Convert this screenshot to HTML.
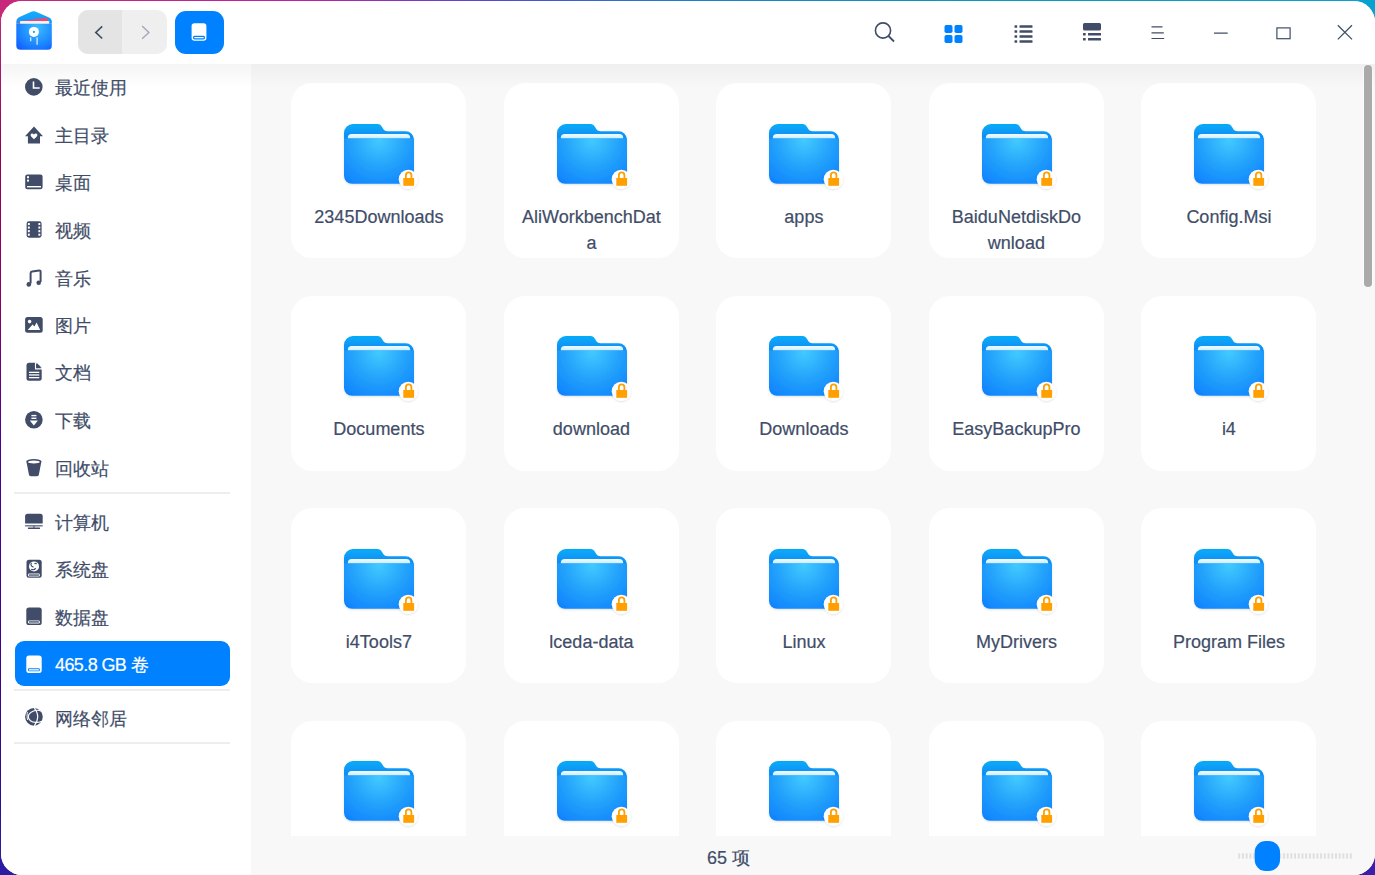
<!DOCTYPE html>
<html><head><meta charset="utf-8">
<style>
html,body{margin:0;padding:0;}
body{width:1375px;height:875px;overflow:hidden;position:relative;
 background:linear-gradient(180deg,#c42a82 0%,#900062 17%,#8a006a 34%,#4d0090 51%,#460088 74%,#2a1090 92%,#3020a8 100%);
 font-family:"Liberation Sans",sans-serif;}
#bgtop{position:absolute;left:0;top:0;width:1375px;height:22px;background:linear-gradient(90deg,#c8287a 0%,#be1eaa 22%,#524ad0 36%,#1e7fcc 49.5%,#049cbc 73%,#06a3d2 100%);}
#bgbot{position:absolute;left:0;top:850px;width:1375px;height:25px;background:linear-gradient(90deg,#2c1ca4 0%,#3a20a8 100%);}
#win{position:absolute;left:1px;top:1px;width:1374px;height:874px;border-radius:21px;overflow:hidden;background:#fff;}
.abs{position:absolute;}
#title{left:0;top:0;width:1374px;height:63px;background:#fff;}
#side{left:0;top:63px;width:250px;height:811px;background:#fff;}
#side .shade{left:0;top:0;width:250px;height:24px;background:linear-gradient(180deg,#f5f5f5,#fff);}
#content{left:250px;top:63px;width:1124px;height:772px;background:#f8f8f8;overflow:hidden;}
#content .shade{left:0;top:0;width:1124px;height:24px;background:linear-gradient(180deg,#efefef,#f8f8f8);}
#status{left:250px;top:835px;width:1124px;height:39px;background:#f8f8f8;}
.item{position:absolute;left:14px;width:215px;height:45px;border-radius:9px;}
.item .ic{position:absolute;left:10px;top:13.5px;width:18px;height:18px;}
.item .tx{position:absolute;left:40px;top:1.5px;height:45px;line-height:45px;font-size:18px;color:#414d68;white-space:nowrap;-webkit-text-stroke:0.2px currentColor;}
.item.sel{background:#0081ff;}
.item.sel .tx{color:#fff;}
.sep{position:absolute;left:13px;width:216px;height:2px;background:#eeeeee;}
.card{position:absolute;width:175px;height:175px;border-radius:21px;background:#fff;}
.card svg{position:absolute;left:53px;top:40.8px;width:80px;height:70px;}
.card .nm{position:absolute;left:0;top:120.5px;width:175px;text-align:center;font-size:18px;line-height:26.5px;color:#414d68;-webkit-text-stroke:0.2px #414d68;}
</style></head><body>
<div id="bgtop"></div><div id="bgbot"></div>
<svg width="0" height="0" style="position:absolute">
 <defs>
  <linearGradient id="gback" x1="0" y1="0" x2="0" y2="1">
   <stop offset="0" stop-color="#06acf9"/><stop offset="0.4" stop-color="#0b90f5"/><stop offset="1" stop-color="#0a7ff2"/>
  </linearGradient>
  <radialGradient id="gfront" cx="35" cy="16" r="58" gradientUnits="userSpaceOnUse">
   <stop offset="0" stop-color="#42caff"/><stop offset="0.5" stop-color="#22a0fb"/><stop offset="1" stop-color="#0a7cff"/>
  </radialGradient>
  <linearGradient id="gpaper" x1="0" y1="0" x2="0" y2="1">
   <stop offset="0" stop-color="#f2fbff"/><stop offset="1" stop-color="#c9eeff"/>
  </linearGradient>
  <filter id="fsh" x="-20%" y="-20%" width="140%" height="140%">
   <feDropShadow dx="0" dy="1" stdDeviation="1" flood-color="#000" flood-opacity="0.12"/>
  </filter>
  <g id="folder">
   <g filter="url(#fsh)">
   <path d="M0,9 A9,9 0 0 1 9,0 H33.2 C35.8,0 36.8,1 38,3 L39.4,5.3 C40.6,6.8 41.6,7.2 43.4,7.2 H61.5 A8.5,8.5 0 0 1 70,15.7 V30 H0 Z" fill="url(#gback)"/>
   <path d="M3.8,14.5 V14 A4,4 0 0 1 7.8,10 H62.2 A4,4 0 0 1 66.2,14 V14.5 Z" fill="url(#gpaper)"/>
   <path d="M0,14.4 H70 V51.8 A8,8 0 0 1 62,59.8 H8 A8,8 0 0 1 0,51.8 Z" fill="url(#gfront)"/>
   </g>
   <circle cx="64.3" cy="55.3" r="9.6" fill="#fff" filter="url(#fsh)"/>
   <path d="M61.9,54.5 V51.2 A2.75,2.75 0 0 1 67.4,51.2 V54.5" fill="none" stroke="#ffa000" stroke-width="1.8"/>
   <rect x="59.3" y="54" width="10.8" height="7.8" fill="#ffa000"/>
  </g>
 </defs>
</svg>
<div id="win">
 <div id="title" class="abs">
  <!-- app icon -->
  <svg class="abs" style="left:13px;top:8px" width="40" height="42" viewBox="-1 -1 40 42">
   <defs>
    <radialGradient id="gapp" cx="22" cy="18" r="26" gradientUnits="userSpaceOnUse"><stop offset="0" stop-color="#3cbcff"/><stop offset="0.6" stop-color="#1e8cff"/><stop offset="1" stop-color="#1262ff"/></radialGradient>
    <linearGradient id="gapp2" x1="0" y1="0" x2="0" y2="1"><stop offset="0" stop-color="#12b0fb"/><stop offset="1" stop-color="#1690fa"/></linearGradient>
   </defs>
   <path d="M1.3,13.8 V11.5 Q1.3,8.5 4,7.2 L16.8,1.6 Q18.6,0.9 20.4,1.6 L33.5,7.2 Q36.8,8.5 36.8,11.5 V13.8 Z" fill="url(#gapp2)"/>
   <path d="M3.6,13.8 L4.6,11.3 L31.3,7.8 Q32,7.8 32.2,8.6 L33.8,13.8 Z" fill="#f2486e"/>
   <rect x="5" y="11" width="29.2" height="2.9" rx="0.6" fill="#f3f3f3"/>
   <path d="M1.3,13.8 H36.8 V35.7 Q36.8,39.7 32.8,39.7 H5.3 Q1.3,39.7 1.3,35.7 Z" fill="url(#gapp)"/>
   <circle cx="18.9" cy="21.9" r="5" fill="#fff"/><circle cx="18.9" cy="21.9" r="1.1" fill="#18a8f8"/>
   <rect x="15.1" y="27.4" width="1.2" height="3.8" fill="#e6f2ff"/><rect x="21.5" y="27.4" width="1.2" height="7.3" fill="#e6f2ff"/>
  </svg>
  <!-- nav -->
  <div class="abs" style="left:77.2px;top:9.2px;width:88.4px;height:44px;border-radius:10px;overflow:hidden;background:#efefef;">
   <div class="abs" style="left:0;top:0;width:44px;height:44px;background:#e4e4e4;"></div>
   <svg class="abs" style="left:0;top:0" width="88" height="44"><path d="M24.2,16.3 L17.8,22.4 L24.2,28.5" fill="none" stroke="#414d68" stroke-width="1.6"/><path d="M64.1,16.1 L70.9,22.4 L64.1,28.7" fill="none" stroke="#a3a9b8" stroke-width="1.4"/></svg>
  </div>
  <div class="abs" style="left:174px;top:10px;width:49px;height:43px;border-radius:11px;background:#0081ff;">
   <svg class="abs" style="left:0;top:0" width="49" height="43"><rect x="16.6" y="12.2" width="14.8" height="17.6" rx="2.8" fill="#fff"/><rect x="18.6" y="25.4" width="10.8" height="2.4" rx="1" fill="#fff" stroke="#0081ff" stroke-width="1.3"/></svg>
  </div>
  <!-- right icons -->
  <svg class="abs" style="left:859px;top:9px" width="514" height="45">
   <circle cx="23" cy="20.5" r="7.6" fill="none" stroke="#414d68" stroke-width="1.6"/>
   <path d="M28.5,26 L34,31.5" stroke="#414d68" stroke-width="1.8"/>
   <g fill="#0081ff"><rect x="84.5" y="15" width="8" height="8" rx="1.8"/><rect x="94.5" y="15" width="8" height="8" rx="1.8"/><rect x="84.5" y="25" width="8" height="8" rx="1.8"/><rect x="94.5" y="25" width="8" height="8" rx="1.8"/></g>
   <g fill="#414d68"><rect x="154.5" y="15.3" width="2.7" height="2.5" rx=".5"/><rect x="159.5" y="15.3" width="13" height="2.5" rx=".5"/>
    <rect x="154.5" y="20.3" width="2.7" height="2.5" rx=".5"/><rect x="159.5" y="20.3" width="13" height="2.5" rx=".5"/>
    <rect x="154.5" y="25.3" width="2.7" height="2.5" rx=".5"/><rect x="159.5" y="25.3" width="13" height="2.5" rx=".5"/>
    <rect x="154.5" y="30.3" width="2.7" height="2.5" rx=".5"/><rect x="159.5" y="30.3" width="13" height="2.5" rx=".5"/>
    <rect x="223" y="13" width="18" height="7.5" rx="1.5"/>
    <rect x="223" y="23" width="2.7" height="2.5" rx=".5"/><rect x="228" y="23" width="13" height="2.5" rx=".5"/>
    <rect x="223" y="28" width="2.7" height="2.5" rx=".5"/><rect x="228" y="28" width="13" height="2.5" rx=".5"/>
   </g>
   <g stroke="#414d68" stroke-width="1.2" fill="none">
    <path d="M291.5,16.9 H302.5 M291.5,22.8 H303.8 M291.5,28.5 H304.2"/>
    <path d="M354,23.2 H367.7"/>
    <rect x="416.9" y="17.9" width="13.2" height="10.8"/>
    <path d="M477.8,15.2 L492,29.4 M492,15.2 L477.8,29.4" stroke-width="1.25"/>
   </g>
  </svg>
 </div>

 <div id="side" class="abs">
  <div class="shade abs"></div>
  <div class="item" style="top:0.5px"><svg class="ic" viewBox="0 0 18 18" overflow="visible"><circle cx="8.8" cy="8.9" r="8.8" fill="#414d68"/><path d="M8.5,3.6 V10 H14.7" fill="none" stroke="#fff" stroke-width="1.6"/></svg><div class="tx">最近使用</div></div>
  <div class="item" style="top:48.5px"><svg class="ic" viewBox="0 0 18 18" overflow="visible"><path d="M9,0.6 L18,10.2 H15 V17.6 H2.9 V10.2 H0 Z" fill="#414d68"/><path d="M9,13.2 C7.2,11.8 5.6,10.6 5.6,9.1 C5.6,7.4 7.8,6.9 9,8.4 C10.2,6.9 12.4,7.4 12.4,9.1 C12.4,10.6 10.8,11.8 9,13.2 Z" fill="#fff"/></svg><div class="tx">主目录</div></div>
  <div class="item" style="top:95.5px"><svg class="ic" viewBox="0 0 18 18" overflow="visible"><g transform="translate(0,1)"><rect x="0.2" y="0.5" width="17.4" height="14.8" rx="2.2" fill="#414d68"/><rect x="2" y="12" width="14" height="1.4" fill="#fff"/><rect x="2" y="2.2" width="2" height="2" fill="#fff"/><rect x="2" y="5.6" width="2" height="2" fill="#fff"/></g></svg><div class="tx">桌面</div></div>
  <div class="item" style="top:143.5px"><svg class="ic" viewBox="0 0 18 18" overflow="visible"><rect x="1.6" y="0.3" width="15" height="16.4" rx="2.4" fill="#414d68"/><rect x="2.9" y="2.0" width="1.9" height="2.1" fill="#fff"/><rect x="13.4" y="2.0" width="1.9" height="2.1" fill="#fff"/><rect x="2.9" y="5.55" width="1.9" height="2.1" fill="#fff"/><rect x="13.4" y="5.55" width="1.9" height="2.1" fill="#fff"/><rect x="2.9" y="9.1" width="1.9" height="2.1" fill="#fff"/><rect x="13.4" y="9.1" width="1.9" height="2.1" fill="#fff"/><rect x="2.9" y="12.649999999999999" width="1.9" height="2.1" fill="#fff"/><rect x="13.4" y="12.649999999999999" width="1.9" height="2.1" fill="#fff"/></svg><div class="tx">视频</div></div>
  <div class="item" style="top:191.0px"><svg class="ic" viewBox="0 0 18 18" overflow="visible"><g transform="translate(0,1)"><path d="M5.6,13.6 V3.2 Q5.6,1.6 7.2,1.4 L14.2,0.5 Q15.6,0.4 15.6,1.9 V12" fill="none" stroke="#414d68" stroke-width="2"/><circle cx="3.8" cy="14.4" r="2.3" fill="#414d68"/><circle cx="13.7" cy="12.7" r="2.3" fill="#414d68"/></g></svg><div class="tx">音乐</div></div>
  <div class="item" style="top:238.5px"><svg class="ic" viewBox="0 0 18 18" overflow="visible"><rect x="0.1" y="1.1" width="17.6" height="15.6" rx="2.5" fill="#414d68"/><circle cx="4.6" cy="5.6" r="1.8" fill="#fff"/><path d="M2.7,13.9 L7.6,8.4 L9.4,10.4 L11.6,6.6 L15.2,13.9 Z" fill="#fff"/></svg><div class="tx">图片</div></div>
  <div class="item" style="top:285.5px"><svg class="ic" viewBox="0 0 18 18" overflow="visible"><path d="M4,-0.3 H10.4 L16.7,6 V15.3 Q16.7,17.8 14.2,17.8 H4 Q1.5,17.8 1.5,15.3 V2.2 Q1.5,-0.3 4,-0.3 Z" fill="#414d68"/><path d="M11.6,-0.3 L16.7,4.8 H11.6 Z" fill="#414d68"/><path d="M10.5,-0.5 V5.9 H16.9" fill="none" stroke="#fff" stroke-width="1.1"/><rect x="4" y="8.7" width="10.3" height="1.3" fill="#fff"/><rect x="4" y="11.3" width="10.3" height="1.3" fill="#fff"/><rect x="4" y="14" width="10.3" height="1.3" fill="#fff"/></svg><div class="tx">文档</div></div>
  <div class="item" style="top:333.5px"><svg class="ic" viewBox="0 0 18 18" overflow="visible"><circle cx="8.9" cy="8.8" r="8.8" fill="#414d68"/><rect x="6.4" y="3.9" width="5" height="1.4" fill="#fff"/><rect x="6.4" y="6.6" width="5" height="1.4" fill="#fff"/><path d="M4.8,9.6 H12.9 L8.85,14.6 Z" fill="#fff"/></svg><div class="tx">下载</div></div>
  <div class="item" style="top:381.0px"><svg class="ic" viewBox="0 0 18 18" overflow="visible"><path d="M1.4,2.6 L3.9,15.4 Q4.2,17.3 6.2,17.3 H11.6 Q13.6,17.3 13.9,15.4 L16.4,2.6 Z" fill="#414d68"/><ellipse cx="8.9" cy="2.6" rx="7.6" ry="2.6" fill="#414d68"/><ellipse cx="8.9" cy="3" rx="6" ry="1.5" fill="#fff"/></svg><div class="tx">回收站</div></div>
  <div class="item" style="top:435.0px"><svg class="ic" viewBox="0 0 18 18" overflow="visible"><path d="M0.1,3.3 Q0.1,0.8 2.6,0.8 H15.2 Q17.7,0.8 17.7,3.3 V10.6 H0.1 Z" fill="#414d68"/><rect x="0.1" y="12.3" width="17.6" height="1.1" fill="#414d68"/><rect x="8.1" y="13.3" width="1.6" height="1.3" fill="#414d68"/><rect x="2.9" y="14.5" width="12.1" height="1.6" rx="0.5" fill="#414d68"/></svg><div class="tx">计算机</div></div>
  <div class="item" style="top:482.5px"><svg class="ic" viewBox="0 0 18 18" overflow="visible"><rect x="1.5" y="-0.3" width="15.2" height="18.1" rx="2.5" fill="#414d68"/><circle cx="9" cy="6.4" r="5" fill="#fff"/><path d="M6.6,2.9 C5.3,4.3 5.9,6.3 8.5,7.1 M6.2,9.2 C7.8,10 9.7,9.7 10.7,8.1 M9.5,3.7 C10.3,3.2 11,3.3 11.7,3.8" fill="none" stroke="#414d68" stroke-width="1.15"/><rect x="3.1" y="13.5" width="11.7" height="3" rx="1.2" fill="#fff"/><rect x="4" y="14.4" width="9.9" height="1.3" fill="#414d68"/></svg><div class="tx">系统盘</div></div>
  <div class="item" style="top:530.0px"><svg class="ic" viewBox="0 0 18 18" overflow="visible"><rect x="1.3" y="-0.4" width="15.4" height="17.4" rx="2.6" fill="#414d68"/><rect x="3.1" y="12.4" width="11.7" height="3" rx="1.2" fill="#fff"/><rect x="4" y="13.3" width="9.9" height="1.3" fill="#414d68"/></svg><div class="tx">数据盘</div></div>
  <div class="item sel" style="top:577.0px"><svg class="ic" viewBox="0 0 18 18" overflow="visible"><rect x="1.3" y="0.5" width="15.4" height="17.6" rx="2.8" fill="#fff"/><rect x="3" y="13.3" width="11.9" height="3" rx="1.2" fill="#0081ff"/><rect x="4" y="14.2" width="9.9" height="1.3" fill="#fff"/></svg><div class="tx"><span style="letter-spacing:-0.6px">465.8 GB</span> 卷</div></div>
  <div class="item" style="top:631.5px"><svg class="ic" viewBox="0 0 18 18" overflow="visible"><circle cx="8.93" cy="7.8" r="8.85" fill="#414d68"/><path d="M16.5,2.3 C14,1 11,0.9 8,2.2 C5,3.6 3.3,5.5 3.3,7.8 C3.3,10.8 6.5,13.2 10.6,13.4 C12.8,13.5 15,13 17,12.2" fill="none" stroke="#fff" stroke-width="1.2"/><path d="M9.3,-0.9 C11.8,2.2 12.8,5.5 12.7,8.3 C12.6,11.3 11.5,14 9.3,16.8" fill="none" stroke="#fff" stroke-width="1.2"/><path d="M2.4,3 C1.9,5.5 1.9,8.5 2.6,11" fill="none" stroke="#fff" stroke-width="0.9"/></svg><div class="tx">网络邻居</div></div>
  <div class="sep" style="top:428px"></div>
  <div class="sep" style="top:624.5px"></div>
  <div class="sep" style="top:678px"></div>
 </div>

 <div id="content" class="abs">
  <div class="shade abs"></div>
  <div class="card" style="left:40.4px;top:19.0px"><svg viewBox="0 0 80 70" overflow="visible"><use href="#folder"/></svg><div class="nm">2345Downloads</div></div>
  <div class="card" style="left:252.9px;top:19.0px"><svg viewBox="0 0 80 70" overflow="visible"><use href="#folder"/></svg><div class="nm">AliWorkbenchDat<br>a</div></div>
  <div class="card" style="left:465.4px;top:19.0px"><svg viewBox="0 0 80 70" overflow="visible"><use href="#folder"/></svg><div class="nm">apps</div></div>
  <div class="card" style="left:677.9px;top:19.0px"><svg viewBox="0 0 80 70" overflow="visible"><use href="#folder"/></svg><div class="nm">BaiduNetdiskDo<br>wnload</div></div>
  <div class="card" style="left:890.4px;top:19.0px"><svg viewBox="0 0 80 70" overflow="visible"><use href="#folder"/></svg><div class="nm">Config.Msi</div></div>
  <div class="card" style="left:40.4px;top:231.5px"><svg viewBox="0 0 80 70" overflow="visible"><use href="#folder"/></svg><div class="nm">Documents</div></div>
  <div class="card" style="left:252.9px;top:231.5px"><svg viewBox="0 0 80 70" overflow="visible"><use href="#folder"/></svg><div class="nm">download</div></div>
  <div class="card" style="left:465.4px;top:231.5px"><svg viewBox="0 0 80 70" overflow="visible"><use href="#folder"/></svg><div class="nm">Downloads</div></div>
  <div class="card" style="left:677.9px;top:231.5px"><svg viewBox="0 0 80 70" overflow="visible"><use href="#folder"/></svg><div class="nm">EasyBackupPro</div></div>
  <div class="card" style="left:890.4px;top:231.5px"><svg viewBox="0 0 80 70" overflow="visible"><use href="#folder"/></svg><div class="nm">i4</div></div>
  <div class="card" style="left:40.4px;top:444.0px"><svg viewBox="0 0 80 70" overflow="visible"><use href="#folder"/></svg><div class="nm">i4Tools7</div></div>
  <div class="card" style="left:252.9px;top:444.0px"><svg viewBox="0 0 80 70" overflow="visible"><use href="#folder"/></svg><div class="nm">lceda-data</div></div>
  <div class="card" style="left:465.4px;top:444.0px"><svg viewBox="0 0 80 70" overflow="visible"><use href="#folder"/></svg><div class="nm">Linux</div></div>
  <div class="card" style="left:677.9px;top:444.0px"><svg viewBox="0 0 80 70" overflow="visible"><use href="#folder"/></svg><div class="nm">MyDrivers</div></div>
  <div class="card" style="left:890.4px;top:444.0px"><svg viewBox="0 0 80 70" overflow="visible"><use href="#folder"/></svg><div class="nm">Program Files</div></div>
  <div class="card" style="left:40.4px;top:656.5px"><svg viewBox="0 0 80 70" overflow="visible"><use href="#folder"/></svg><div class="nm"></div></div>
  <div class="card" style="left:252.9px;top:656.5px"><svg viewBox="0 0 80 70" overflow="visible"><use href="#folder"/></svg><div class="nm"></div></div>
  <div class="card" style="left:465.4px;top:656.5px"><svg viewBox="0 0 80 70" overflow="visible"><use href="#folder"/></svg><div class="nm"></div></div>
  <div class="card" style="left:677.9px;top:656.5px"><svg viewBox="0 0 80 70" overflow="visible"><use href="#folder"/></svg><div class="nm"></div></div>
  <div class="card" style="left:890.4px;top:656.5px"><svg viewBox="0 0 80 70" overflow="visible"><use href="#folder"/></svg><div class="nm"></div></div>
 </div>

 <div id="status" class="abs">
  <div class="abs" style="left:456px;top:3px;height:39px;font-size:18px;line-height:39px;color:#414d68;white-space:nowrap;-webkit-text-stroke:0.2px #414d68;">65 项</div>
  <svg class="abs" style="left:0;top:0" width="1124" height="39"><rect x="987.30" y="17.3" width="1.9" height="5.3" fill="#dedede"/><rect x="991.02" y="17.3" width="1.9" height="5.3" fill="#dedede"/><rect x="994.74" y="17.3" width="1.9" height="5.3" fill="#dedede"/><rect x="998.46" y="17.3" width="1.9" height="5.3" fill="#dedede"/><rect x="1002.18" y="17.3" width="1.9" height="5.3" fill="#dedede"/><rect x="1005.90" y="17.3" width="1.9" height="5.3" fill="#dedede"/><rect x="1009.62" y="17.3" width="1.9" height="5.3" fill="#dedede"/><rect x="1013.34" y="17.3" width="1.9" height="5.3" fill="#dedede"/><rect x="1017.06" y="17.3" width="1.9" height="5.3" fill="#dedede"/><rect x="1020.78" y="17.3" width="1.9" height="5.3" fill="#dedede"/><rect x="1024.50" y="17.3" width="1.9" height="5.3" fill="#dedede"/><rect x="1028.22" y="17.3" width="1.9" height="5.3" fill="#dedede"/><rect x="1031.94" y="17.3" width="1.9" height="5.3" fill="#dedede"/><rect x="1035.66" y="17.3" width="1.9" height="5.3" fill="#dedede"/><rect x="1039.38" y="17.3" width="1.9" height="5.3" fill="#dedede"/><rect x="1043.10" y="17.3" width="1.9" height="5.3" fill="#dedede"/><rect x="1046.82" y="17.3" width="1.9" height="5.3" fill="#dedede"/><rect x="1050.54" y="17.3" width="1.9" height="5.3" fill="#dedede"/><rect x="1054.26" y="17.3" width="1.9" height="5.3" fill="#dedede"/><rect x="1057.98" y="17.3" width="1.9" height="5.3" fill="#dedede"/><rect x="1061.70" y="17.3" width="1.9" height="5.3" fill="#dedede"/><rect x="1065.42" y="17.3" width="1.9" height="5.3" fill="#dedede"/><rect x="1069.14" y="17.3" width="1.9" height="5.3" fill="#dedede"/><rect x="1072.86" y="17.3" width="1.9" height="5.3" fill="#dedede"/><rect x="1076.58" y="17.3" width="1.9" height="5.3" fill="#dedede"/><rect x="1080.30" y="17.3" width="1.9" height="5.3" fill="#dedede"/><rect x="1084.02" y="17.3" width="1.9" height="5.3" fill="#dedede"/><rect x="1087.74" y="17.3" width="1.9" height="5.3" fill="#dedede"/><rect x="1091.46" y="17.3" width="1.9" height="5.3" fill="#dedede"/><rect x="1095.18" y="17.3" width="1.9" height="5.3" fill="#dedede"/><rect x="1098.90" y="17.3" width="1.9" height="5.3" fill="#dedede"/><rect x="1003.7" y="5" width="25.3" height="30" rx="11" fill="#0081ff"/></svg>
 </div>
 <div class="abs" style="left:1363.4px;top:64px;width:7.6px;height:221.8px;border-radius:3.8px;background:#aaaaaa;box-shadow:0 0 0 1px rgba(255,255,255,0.5);"></div>
</div>
</body></html>
